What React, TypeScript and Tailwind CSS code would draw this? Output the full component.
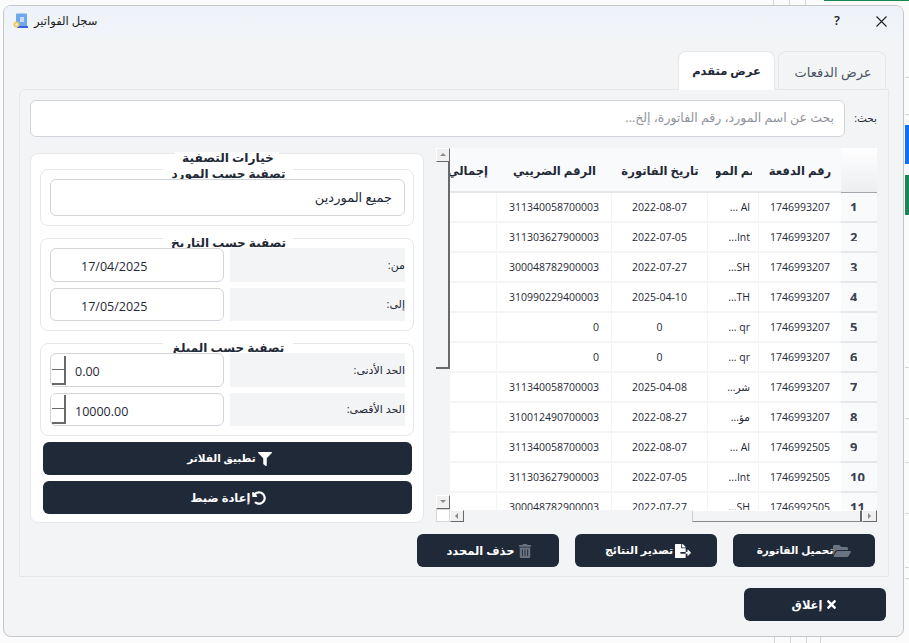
import React from "react";
import { FaFilter, FaUndoAlt, FaFolderOpen, FaFileExport, FaTrashAlt, FaTimes } from "react-icons/fa";

const rows: [string, string, string, string][] = [
  ["1746993207", "... Al", "2022-08-07", "311340058700003"],
  ["1746993207", "...Int", "2022-07-05", "311303627900003"],
  ["1746993207", "...SH", "2022-07-27", "300048782900003"],
  ["1746993207", "...TH", "2025-04-10", "310990229400003"],
  ["1746993207", "... qr", "0", "0"],
  ["1746993207", "... qr", "0", "0"],
  ["1746993207", "شر...", "2025-04-08", "311340058700003"],
  ["1746993207", "مؤ...", "2022-08-27", "310012490700003"],
  ["1746992505", "... Al", "2022-08-07", "311340058700003"],
  ["1746992505", "...Int", "2022-07-05", "311303627900003"],
  ["1746992505", "...SH", "2022-07-27", "300048782900003"],
];

const hLines = [77, 114, 367, 418, 462, 513, 567, 578];
const topV = [773, 789, 805];
const botV = [774, 790, 806, 820];

function ScrollButton({ dir, className }: { dir: "up" | "down" | "left" | "right"; className: string }) {
  const pts = { up: "0,4 3,1 6,4", down: "0,1 3,4 6,1", left: "4,0 1,3 4,6", right: "1,0 4,3 1,6" }[dir];
  return (
    <div className={`flex items-center justify-center bg-[#f0f0f0] border-r border-b border-r-[#696969] border-b-[#696969] border-t border-l border-t-white border-l-white ${className}`}>
      <svg width="6" height="6" viewBox="0 0 6 6"><polygon points={pts} fill="#8a8a8a" /></svg>
    </div>
  );
}

function Legend({ children }: { children: string }) {
  return (
    <div dir="rtl" className="mx-auto -mt-[2px] h-[11px] w-[130px] overflow-hidden bg-white pl-[2px] text-center text-[12px] font-bold leading-[12px] text-[#1f2937]">
      {children}
    </div>
  );
}

function Field({ children, className = "" }: { children: React.ReactNode; className?: string }) {
  return <div className={`flex h-full w-[174px] items-center rounded-[6px] border border-[#d1d5db] bg-white text-[12.5px] text-[#1f2937] ${className}`}>{children}</div>;
}

function LabelCell({ children }: { children: string }) {
  return (
    <div dir="rtl" className="flex h-full w-[175px] items-center bg-[#f3f4f6] text-[11px] text-[#1f2937]">
      {children}
    </div>
  );
}

function Spin() {
  return (
    <div className="ml-[1px] flex h-[29px] w-[14px] flex-col">
      <div className="h-[14px] border-r-2 border-b border-r-[#696969] border-b-[#696969] bg-white" />
      <div className="h-[15px] border-r-2 border-b-2 border-r-[#696969] border-b-[#696969] bg-white" />
    </div>
  );
}

function DarkButton({ icon, label, className = "", textClass = "text-[11.5px]" }: { icon: React.ReactNode; label: string; className?: string; textClass?: string }) {
  return (
    <button className={`flex items-center justify-center rounded-[6px] bg-[#1f2937] font-bold text-white ${className}`}>
      <span dir="rtl" className={textClass}>{label}</span>
      {icon}
    </button>
  );
}

export default function App() {
  return (
    <div className="relative h-[643px] w-[909px] overflow-hidden bg-[#fbfbfb] pl-[3px] pt-[5px]" style={{ fontFamily: '"Open Sans", "DejaVu Sans", sans-serif' }}>
      {hLines.map((y) => (
        <div key={y} className="absolute left-[905px] h-px w-[4px] bg-[#d4d4d4]" style={{ top: y }} />
      ))}
      {topV.map((x) => (
        <div key={x} className="absolute top-0 h-[5px] w-px bg-[#d4d4d4]" style={{ left: x }} />
      ))}
      {botV.map((x) => (
        <div key={x} className="absolute top-[637px] h-[6px] w-px bg-[#d4d4d4]" style={{ left: x }} />
      ))}
      <div className="absolute left-[905px] top-[125px] h-[39px] w-[4px] bg-[#0d6efd]" />
      <div className="absolute left-[905px] top-[175px] h-[40px] w-[4px] bg-[#198754]" />
      <div className="absolute left-[824px] top-0 h-px w-[85px] bg-[#198754]" />
      <div className="relative flex h-[632px] w-[901px] flex-col overflow-hidden rounded-[8px] border border-[#c4c6c9] bg-[#f3f4f6]">
        <div className="flex h-[30px] shrink-0 items-center bg-gradient-to-b from-[#eef3f9] to-[#f1f4f8] pl-[9px] pr-[16px]">
          <svg width="16" height="16" viewBox="0 0 16 16" className="mr-[5px]">
            <rect x="3" y="0.5" width="11" height="13" rx="1" fill="#6fa8ee" />
            <rect x="4" y="13" width="11" height="2" fill="#3b5fe0" />
            <rect x="7" y="4" width="4" height="5" fill="#c5dcf7" />
            <circle cx="3.5" cy="11.5" r="3" fill="#f0c659" />
            <circle cx="3.5" cy="11.5" r="1.2" fill="#f3f4f6" />
          </svg>
          <span dir="rtl" className="text-[11.5px] text-[#1a1a1a]">سجل الفواتير</span>
          <span className="ml-auto mr-[36px] text-[13px] font-semibold text-[#222]">?</span>
          <svg width="11" height="11" viewBox="0 0 11 11"><path d="M0.5 0.5L10.5 10.5M10.5 0.5L0.5 10.5" stroke="#222" strokeWidth="1.1" /></svg>
        </div>

        <div className="flex flex-col pl-[15px] pr-[14px] pt-[15px]">
          <div className="flex h-[39px] justify-end gap-[3px] pr-[3px]">
            <div dir="rtl" className="z-10 flex h-[39px] w-[97px] items-center justify-center overflow-hidden rounded-t-[8px] border border-b-0 border-[#e5e7eb] bg-white text-[11.5px] font-bold text-[#1f2937]">عرض متقدم</div>
            <div dir="rtl" className="flex h-[38px] w-[108px] items-center justify-center rounded-t-[8px] border border-b-0 border-[#e5e7eb] bg-[#f3f4f6] pl-[2px] pt-[5px] text-[13px] text-[#4b5563]">عرض الدفعات</div>
          </div>
          <div className="-mt-px flex h-[488px] flex-col rounded-tl-[6px] border border-[#e5e7eb] pl-[10px] pr-[11px] pt-[10px]">
            <div className="flex h-[37px] shrink-0 items-center">
              <div dir="rtl" className="flex h-full w-[815px] items-center rounded-[6px] border border-[#d1d5db] bg-white pr-[10px] text-[12.5px] text-[#8f949c]">بحث عن اسم المورد، رقم الفاتورة، إلخ...</div>
              <div dir="rtl" className="flex-1 pl-px text-[10.5px] text-[#1f2937]">بحث:</div>
            </div>

            <div className="mt-[11px] flex h-[374px] shrink-0 gap-[12px]">
              <div className="mt-[5px] h-[370px] w-[394px] rounded-[8px] border border-[#e5e7eb] bg-white px-[9px]">
                <div dir="rtl" className="mx-auto -mt-[2px] h-[17px] w-[104px] overflow-hidden bg-white pl-[2px] text-center text-[12.2px] font-bold leading-[12px] text-[#1f2937]">خيارات التصفية</div>
                <div className="h-[57px] rounded-[8px] border border-[#e5e7eb] pl-[9px] pr-[8px]">
                  <Legend>تصفية حسب المورد</Legend>
                  <div dir="rtl" className="flex h-[37px] items-center rounded-[6px] border border-[#d1d5db] bg-white pr-[12px] text-[13px] text-[#1f2937]">جميع الموردين</div>
                </div>

                <div className="mt-[12px] h-[93px] rounded-[8px] border border-[#e5e7eb] pl-[9px] pr-[8px]">
                  <Legend>تصفية حسب التاريخ</Legend>
                  <div className="flex h-[34px] gap-[6px]">
                    <Field><span className="pl-[30px] pt-[4px]">17/04/2025</span></Field>
                    <LabelCell>من:</LabelCell>
                  </div>
                  <div className="mt-[6px] flex h-[33px] gap-[6px]">
                    <Field><span className="pl-[30px] pt-[6px]">17/05/2025</span></Field>
                    <LabelCell>إلى:</LabelCell>
                  </div>
                </div>

                <div className="mt-[12px] h-[93px] rounded-[8px] border border-[#e5e7eb] pl-[9px] pr-[8px]">
                  <Legend>تصفية حسب المبلغ</Legend>
                  <div className="flex h-[34px] gap-[6px]">
                    <Field><Spin /><span className="pl-[9px] pt-[4px]">0.00</span></Field>
                    <LabelCell>الحد الأدنى:</LabelCell>
                  </div>
                  <div className="mt-[6px] flex h-[33px] gap-[6px]">
                    <Field><Spin /><span className="pl-[9px] pt-[6px]">10000.00</span></Field>
                    <LabelCell>الحد الأقصى:</LabelCell>
                  </div>
                </div>

                <DarkButton className="mx-[3px] mt-[6px] h-[33px] w-[369px] pl-[4px]" textClass="text-[10.5px]" label="تطبيق الفلاتر" icon={<FaFilter size={14} className="ml-[2px]" />} />
                <DarkButton className="mx-[3px] mt-[6px] h-[33px] w-[369px] pl-[2px]" label="إعادة ضبط" icon={<FaUndoAlt size={14} className="ml-[2px]" />} />
              </div>

              <div className="flex h-[374px] w-[441px]">
                <div className="flex w-[14px] flex-col bg-[#f3f4f6]">
                  <ScrollButton dir="up" className="h-[14px] w-[14px] shrink-0" />
                  <div className="h-[207px] w-[14px] shrink-0 border-r-2 border-b-2 border-r-[#696969] border-b-[#696969] bg-[#f3f4f6]" />
                  <div className="flex-1" />
                  <ScrollButton dir="down" className="h-[14px] w-[14px] shrink-0" />
                  <div className="h-[13px] w-[14px] shrink-0 border border-[#d8d8d8] bg-white" />
                </div>
                <div className="flex w-[427px] flex-col">
                  <div className="flex h-[362px] flex-col overflow-hidden">
                    <div className="flex h-[45px] shrink-0 bg-[#f9fafb] text-[11.6px] font-bold text-[#1f2937]">
                      <div dir="rtl" className="flex w-[47px] items-center overflow-hidden whitespace-nowrap border-b-2 border-[#e5e7eb] pr-[9px] pt-[2px]">إجمالي</div>
                      <div dir="rtl" className="flex w-[115px] items-center justify-center whitespace-nowrap border-b-2 border-[#e5e7eb] pt-[2px]">الرقم الضريبي</div>
                      <div dir="rtl" className="flex w-[96px] items-center justify-center whitespace-nowrap border-b-2 border-[#e5e7eb] pt-[2px]">تاريخ الفاتورة</div>
                      <div className="flex w-[51px] items-center justify-center border-b-2 border-[#e5e7eb] pt-[2px]">
                        <div dir="rtl" className="flex w-[36px] justify-center overflow-hidden whitespace-nowrap">اسم المورد</div>
                      </div>
                      <div dir="rtl" className="flex w-[82px] items-center justify-center whitespace-nowrap border-b-2 border-[#e5e7eb] pt-[2px]">رقم الدفعة</div>
                      <div className="w-[36px] border-b border-[#a3a7ad] bg-gradient-to-b from-white to-[#eceef0]" />
                    </div>
                    {rows.map((r, i) => (
                      <div key={i} className="flex h-[30px] shrink-0 text-[10.5px] text-[#1f2937]">
                        <div className="w-[47px] border-b-2 border-r border-[#f3f4f6] bg-white" />
                        <div className="flex w-[115px] items-center justify-end border-b-2 border-r border-[#f3f4f6] bg-white pr-[12px] pt-[2px]">{r[3]}</div>
                        <div className="flex w-[96px] items-center justify-center border-b-2 border-r border-[#f3f4f6] bg-white pt-[2px]">{r[2]}</div>
                        <div className="flex w-[51px] items-center justify-end border-b-2 border-r border-[#f3f4f6] bg-white pr-[8px] pt-[2px]"><span dir={/[a-z]/i.test(r[1]) ? "ltr" : "rtl"}>{r[1]}</span></div>
                        <div className="flex w-[82px] items-center justify-end border-b-2 border-[#f3f4f6] bg-white pr-[11px] pt-[2px]">{r[0]}</div>
                        <div className="flex w-[36px] items-center border-b-2 border-[#e5e7eb] bg-[#f9fafb] pb-[2px] pl-[9px] text-[13px] font-bold text-[#374151]">
                          <span className="h-[9px] overflow-hidden leading-[10px]">{i + 1}</span>
                        </div>
                      </div>
                    ))}
                  </div>
                  <div className="flex h-[12px] bg-[#f3f4f6]">
                    <ScrollButton dir="left" className="h-[12px] w-[14px] shrink-0" />
                    <div className="flex-1" />
                    <div className="h-[12px] w-[170px] border-r-2 border-b border-l border-r-[#696969] border-b-[#8a8a8a] border-l-[#d0d0d0] border-t border-t-white bg-[#f3f4f6]" />
                    <ScrollButton dir="right" className="h-[12px] w-[15px] shrink-0" />
                  </div>
                </div>
              </div>
            </div>

            <div className="mt-[12px] flex justify-end gap-[16px] pr-[2px]">
              <DarkButton className="h-[33px] w-[142px] pl-[2px]" label="حذف المحدد" icon={<FaTrashAlt size={14} className="ml-[3px] text-[#6b7280]" />} />
              <DarkButton className="h-[33px] w-[142px] pl-[4px]" textClass="text-[11px]" label="تصدير النتائج" icon={<FaFileExport size={16} className="ml-[2px]" />} />
              <DarkButton className="h-[33px] w-[142px]" textClass="text-[10.5px]" label="تحميل الفاتورة" icon={<FaFolderOpen size={18} className="text-[#6b7280]" />} />
            </div>
          </div>
          <div className="mt-[11px] flex justify-end pr-[3px]">
            <DarkButton className="h-[33px] w-[142px]" label="إغلاق" icon={<FaTimes size={13} className="ml-[3px]" />} />
          </div>
        </div>
      </div>
    </div>
  );
}
